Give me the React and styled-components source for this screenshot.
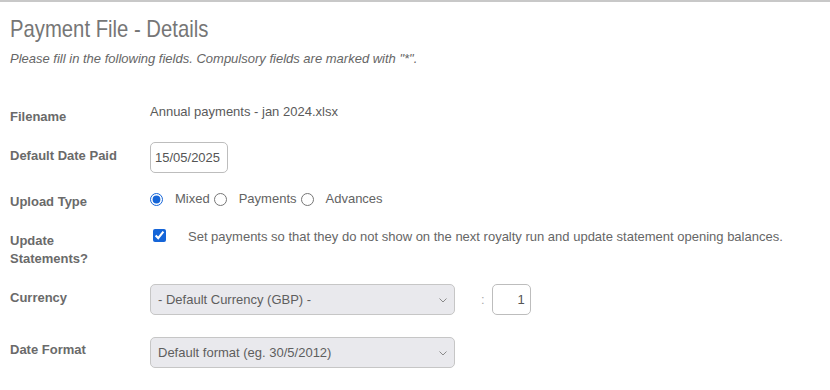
import React from 'react';
import styled, { createGlobalStyle } from 'styled-components';

const Global = createGlobalStyle`
  html, body { margin: 0; padding: 0; background: #fff; }
  body { font-family: "Liberation Sans", Arial, sans-serif; }
`;

const Page = styled.div`
  box-sizing: border-box;
  width: 830px;
  border-top: 2px solid #c8c8c8;
  padding: 13px 10px 0 10px;
`;

const Title = styled.h1`
  margin: 0;
  font-family: "Liberation Sans Narrow", "Arial Narrow", "Liberation Sans", sans-serif;
  font-weight: normal;
  font-size: 24px;
  line-height: 28px;
  color: #767676;
  transform: scaleX(0.845);
  transform-origin: 0 0;
  white-space: nowrap;
`;

const Subtitle = styled.p`
  margin: 8px 0 0;
  font-size: 13px;
  line-height: 15px;
  font-style: italic;
  color: #666;
`;

const Form = styled.div`
  display: flex;
  flex-direction: column;
  margin-top: 38px;
`;

const Row = styled.div`
  display: grid;
  grid-template-columns: 140px 1fr;
  align-items: start;
  margin-top: ${(p) => p.$mt || 0}px;
`;

const Label = styled.div`
  max-width: 115px;
  font-size: 13px;
  font-weight: bold;
  line-height: 18px;
  color: #6a6a6a;
  padding-top: ${(p) => p.$pt || 0}px;
`;

const Value = styled.div`
  font-size: 13px;
  line-height: 16px;
  color: #5a5a5a;
`;

const TextInput = styled.input`
  box-sizing: border-box;
  width: ${(p) => p.$w}px;
  height: 31px;
  margin: 0;
  border: 1px solid #bdbdbd;
  border-radius: 5px;
  padding: ${(p) => (p.$right ? '0 5px 0 4px' : '0 4px')};
  text-align: ${(p) => (p.$right ? 'right' : 'left')};
  font-family: "Liberation Sans", Arial, sans-serif;
  font-size: 13px;
  color: #555;
  background: #fff;
  outline: none;
`;

const OptionGroup = styled.div`
  display: flex;
  align-items: center;
  height: 16px;
`;

const Option = styled.label`
  display: inline-flex;
  align-items: center;
  margin-left: ${(p) => (p.$first ? 0 : 4)}px;
  font-size: 13px;
  line-height: 16px;
  color: #636363;
`;

const Radio = styled.input.attrs({ type: 'radio' })`
  width: 13px;
  height: 13px;
  margin: 0 12px 0 0;
  accent-color: #1565d8;
`;

const CheckRow = styled.label`
  display: flex;
  align-items: flex-start;
  font-size: 13px;
  line-height: 16px;
  color: #666;
`;

const Checkbox = styled.input.attrs({ type: 'checkbox' })`
  width: 13px;
  height: 13px;
  margin: 0 22px 0 3px;
  accent-color: #1565d8;
`;

const Inline = styled.div`
  display: flex;
  align-items: center;
`;

const SelectWrap = styled.div`
  position: relative;
  width: 305px;
  height: 31px;
`;

const Select = styled.select`
  appearance: none;
  box-sizing: border-box;
  width: 100%;
  height: 100%;
  margin: 0;
  padding: 0 24px 0 7px;
  border: 1px solid #c6c6c6;
  border-radius: 5px;
  background: #e9e9ed;
  font-family: "Liberation Sans", Arial, sans-serif;
  font-size: 13px;
  color: #5e5e5e;
  outline: none;
`;

const Chevron = styled.svg`
  position: absolute;
  right: 8px;
  top: 50%;
  margin-top: -2px;
  pointer-events: none;
`;

const Colon = styled.span`
  margin: 0 7px 0 26px;
  font-size: 13px;
  color: #aaa;
`;

function Dropdown({ value }) {
  return (
    <SelectWrap>
      <Select defaultValue={value}>
        <option value={value}>{value}</option>
      </Select>
      <Chevron width="8" height="5" viewBox="0 0 8 5">
        <polyline points="0.5,0.5 4,4 7.5,0.5" fill="none" stroke="#8a8a8a" strokeWidth="1" />
      </Chevron>
    </SelectWrap>
  );
}

export default function App() {
  return (
    <>
      <Global />
      <Page>
        <Title>Payment File - Details</Title>
        <Subtitle>Please fill in the following fields. Compulsory fields are marked with "*".</Subtitle>
        <Form>
          <Row>
            <Label $pt={4}>Filename</Label>
            <Value>Annual payments - jan 2024.xlsx</Value>
          </Row>
          <Row $mt={16}>
            <Label $pt={5}>Default Date Paid</Label>
            <div>
              <TextInput $w={78} defaultValue="15/05/2025" />
            </div>
          </Row>
          <Row $mt={18}>
            <Label $pt={2}>Upload Type</Label>
            <OptionGroup>
              <Option $first>
                <Radio name="ut" defaultChecked />
                Mixed
              </Option>
              <Option>
                <Radio name="ut" />
                Payments
              </Option>
              <Option>
                <Radio name="ut" />
                Advances
              </Option>
            </OptionGroup>
          </Row>
          <Row $mt={18}>
            <Label $pt={3}>Update Statements?</Label>
            <CheckRow>
              <Checkbox defaultChecked />
              Set payments so that they do not show on the next royalty run and update statement opening balances.
            </CheckRow>
          </Row>
          <Row $mt={16}>
            <Label $pt={5}>Currency</Label>
            <Inline>
              <Dropdown value="- Default Currency (GBP) -" />
              <Colon>:</Colon>
              <TextInput $w={39} $right defaultValue="1" />
            </Inline>
          </Row>
          <Row $mt={22}>
            <Label $pt={4}>Date Format</Label>
            <Dropdown value="Default format (eg. 30/5/2012)" />
          </Row>
        </Form>
      </Page>
    </>
  );
}
